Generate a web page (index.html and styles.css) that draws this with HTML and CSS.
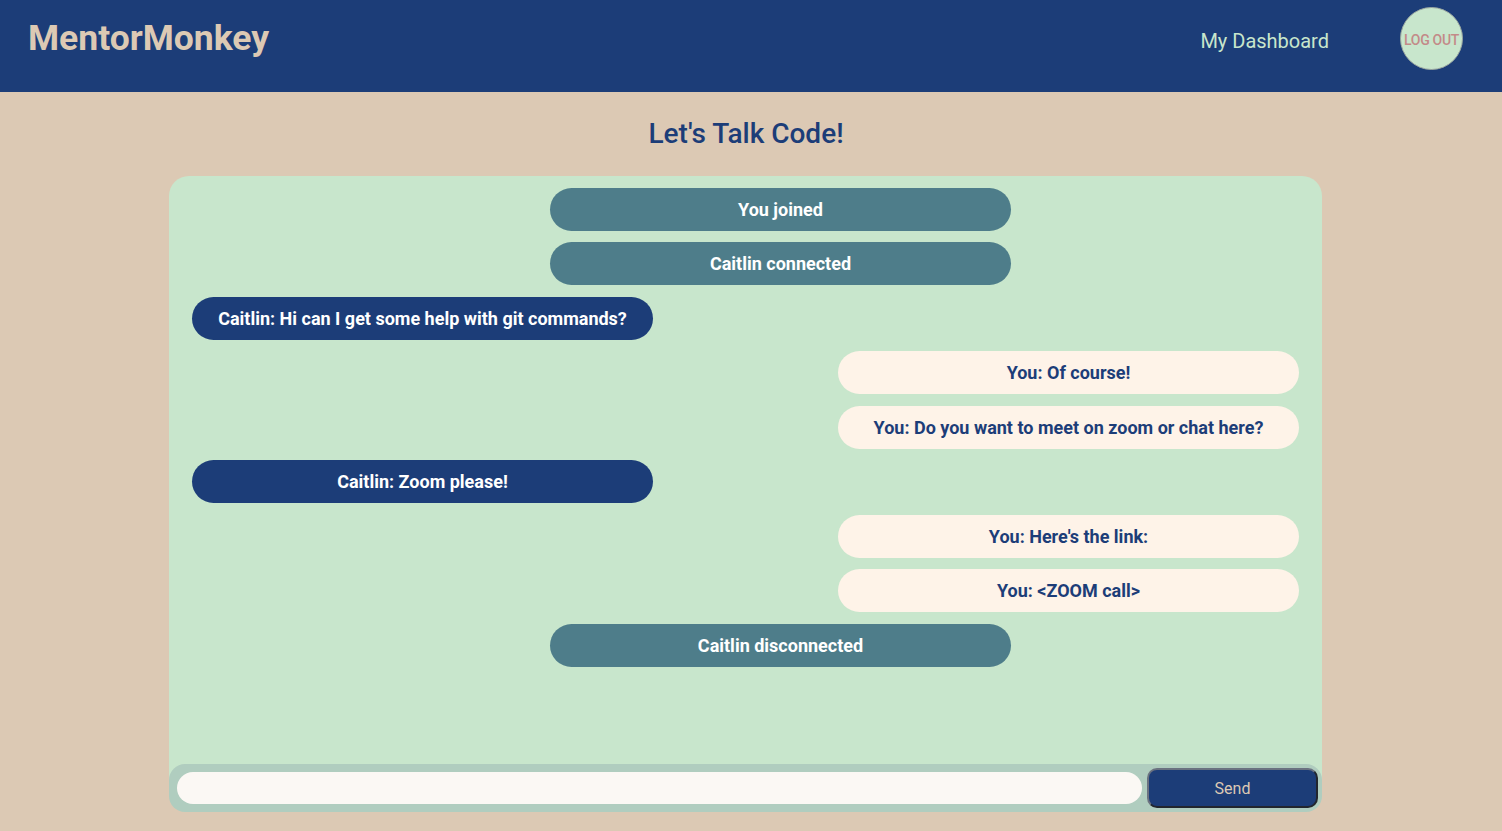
FILE: index.html
```html
<!DOCTYPE html>
<html lang="en">
<head>
<meta charset="utf-8">
<title>MentorMonkey</title>
<link rel="stylesheet" href="styles.css">
</head>
<body>
<header class="topbar">
  <h1 class="brand">MentorMonkey</h1>
  <nav class="nav">
    <a class="nav-link" href="#">My Dashboard</a>
    <button class="logout">LOG OUT</button>
  </nav>
</header>
<main class="main">
  <h2 class="title">Let's Talk Code!</h2>
  <section class="chat">
    <div class="messages">
      <div class="msg msg-info">You joined</div>
      <div class="msg msg-info">Caitlin connected</div>
      <div class="msg msg-them">Caitlin: Hi can I get some help with git commands?</div>
      <div class="msg msg-me">You: Of course!</div>
      <div class="msg msg-me">You: Do you want to meet on zoom or chat here?</div>
      <div class="msg msg-them">Caitlin: Zoom please!</div>
      <div class="msg msg-me">You: Here's the link:</div>
      <div class="msg msg-me">You: &lt;ZOOM call&gt;</div>
      <div class="msg msg-info">Caitlin disconnected</div>
    </div>
    <form class="composer">
      <input class="composer-input" type="text">
      <button class="send" type="button">Send</button>
    </form>
  </section>
</main>
</body>
</html>
```
FILE: styles.css
```css
* { box-sizing: border-box; }
html, body { margin: 0; padding: 0; }
body {
  background: #dcc9b4;
  font-family: Roboto, "Liberation Sans", sans-serif;
  height: 831px;
  overflow: hidden;
}
.topbar {
  height: 92px;
  background: #1c3d78;
  display: flex;
  justify-content: space-between;
  align-items: flex-start;
  padding: 0 39px 0 28px;
}
.brand {
  margin: 17px 0 0 0;
  font-size: 35.5px;
  font-weight: 700;
  color: #dcc9b4;
  line-height: 42px;
}
.nav {
  display: flex;
  align-items: center;
  gap: 71px;
  padding-top: 7px;
}
.nav-link {
  color: #c8e6cc;
  text-decoration: none;
  font-size: 20px;
  line-height: 24px;
  margin-top: 5px;
}
.logout {
  width: 63px;
  height: 63px;
  border-radius: 50%;
  background: #c8e6cc;
  border: 1px solid #9aa6a0;
  color: #c38a88;
  font-family: Roboto, "Liberation Sans", sans-serif;
  font-size: 14px;
  font-weight: 500;
  padding: 2px 0 0 0;
  white-space: nowrap;
  letter-spacing: -0.3px;
}
.main {
  display: flex;
  flex-direction: column;
  align-items: center;
}
.title {
  margin: 25px 0 0 0;
  font-size: 28px;
  font-weight: 500;
  color: #1c3d78;
  line-height: 34px;
  height: 59px;
  transform: translateX(-5px);
}
.chat {
  width: 1153px;
  height: 636px;
  margin-right: 11px;
  background: #c8e6cc;
  border-radius: 20px;
  display: flex;
  flex-direction: column;
}
.messages {
  flex: 1;
  padding: 12px 23px 0 23px;
  display: flex;
  flex-direction: column;
  gap: 11.49px;
}
.msg {
  width: 461px;
  height: 43px;
  border-radius: 22px;
  display: flex;
  align-items: center;
  justify-content: center;
  font-size: 18px;
  font-weight: 700;
}
.msg-info {
  background: #4e7d8a;
  color: #ffffff;
  align-self: flex-start;
  margin-left: 358px;
}
.msg-them {
  background: #1c3d78;
  color: #ffffff;
  align-self: flex-start;
}
.msg-me {
  background: #fef3e8;
  color: #1c3d78;
  align-self: flex-end;
}
.composer {
  margin: 0;
  height: 48px;
  background: #b0cdbf;
  border-radius: 16px;
  display: flex;
  align-items: center;
  padding: 0 4px 0 8px;
  gap: 5px;
}
.composer-input {
  flex: 1;
  height: 32px;
  border: none;
  border-radius: 16px;
  background: #fbf8f4;
  outline: none;
}
.send {
  width: 171px;
  height: 40px;
  background: #1c3d78;
  border: 2px solid #22262e;
  border-top-color: #6b7280;
  border-left-color: #6b7280;
  border-radius: 10px;
  color: #dcc9b4;
  font-family: Roboto, "Liberation Sans", sans-serif;
  font-size: 16px;
}
```
